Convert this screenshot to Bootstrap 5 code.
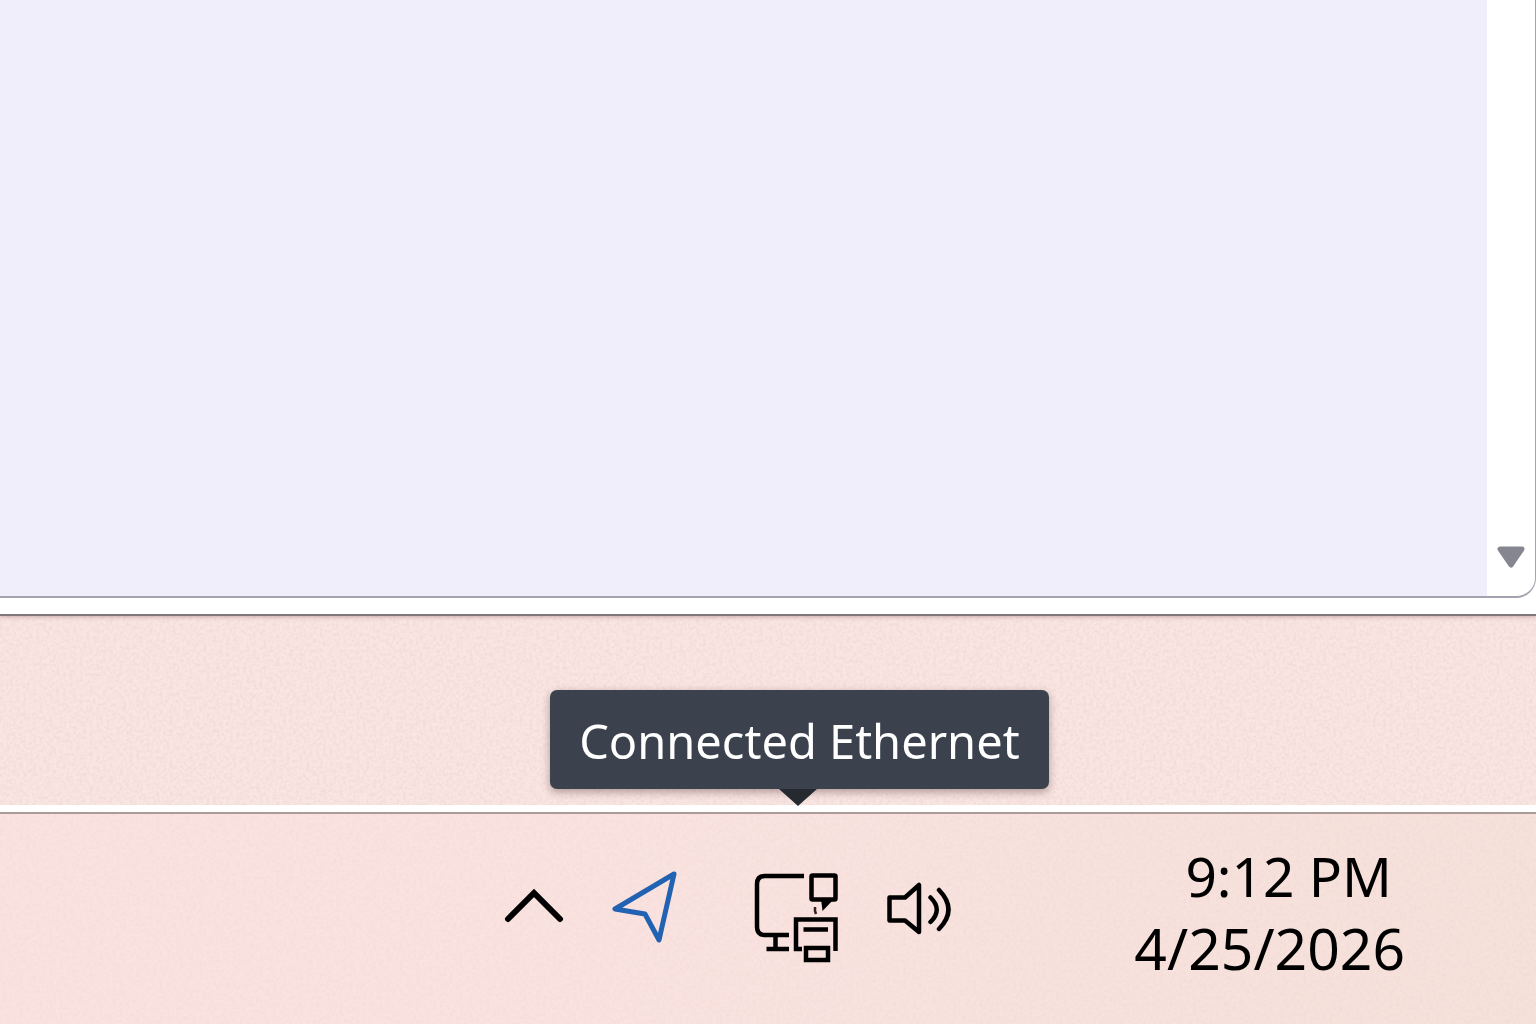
<!DOCTYPE html>
<html lang="en">
<head>
<meta charset="utf-8">
<meta name="viewport" content="width=device-width, initial-scale=1">
<title>Taskbar</title>
<link href="https://cdn.jsdelivr.net/npm/bootstrap@5.3.0/dist/css/bootstrap.min.css" rel="stylesheet">
<style>
  body {
    font-family: "Noto Sans", "Open Sans", sans-serif;
    color: #000;
    background: #f9e5e2;
  }
  .grain { width: 100%; height: 100%; z-index: -1; opacity: .11; }
  .app-window { background: #fff; padding-bottom: 16px; border-bottom: 2px solid #80777a; box-shadow: 0 1px 4px rgba(90, 50, 50, .3); }
  .pane { border: solid #a3a2ad; border-width: 0 1px 2px 0; border-bottom-right-radius: 20px; background: #fff; overflow: hidden; }
  .pane-body { background: #f0eefb; }
  .scroll-track { width: 48px; padding-bottom: 28px; }
  .desktop { height: 189px; }
  .taskbar {
    height: 219px;
    padding: 2px 131px 20px 16px;
    border-top: 7px solid #fff;
    box-shadow: inset 0 2px 0 #aa9a98;
    background: linear-gradient(100deg, rgba(250, 223, 221, .5), rgba(249, 224, 220, .5) 50%, rgba(243, 220, 211, .5));
  }
  .tray-btn { line-height: 0; border-radius: 6px; }
  .tray-btn svg { fill: none; stroke: #000; stroke-width: 5; }
  .gap-a { margin-left: 46px; }
  .gap-b { margin-left: 72px; }
  .gap-c { margin-left: 38px; }
  .clock { margin-left: 182px; padding: 5px 0 0; font-size: 57px; line-height: 73px; text-align: right; color: #000; }
  .clock-time { padding-right: 13px; font-size: 55px; }
  .tip {
    bottom: calc(100% + 64px);
    padding: 4px 29px 0;
    font-size: 47px;
    line-height: 95px;
    color: #fff;
    background: #3b424d;
    border-radius: 7px;
    box-shadow: 0 3px 8px rgba(70, 40, 40, .4);
  }
  .tip::after {
    content: "";
    position: absolute;
    top: 100%;
    left: 50%;
    margin-left: -20px;
    border: 19px solid transparent;
    border-top: 17px solid #252a30;
    border-bottom: 0;
  }
</style>
<script src="https://cdn.jsdelivr.net/npm/bootstrap@5.3.0/dist/js/bootstrap.bundle.min.js"></script>
</head>
<body class="d-flex flex-column min-vh-100 overflow-hidden">
<svg class="grain position-fixed top-0 start-0" aria-hidden="true">
  <filter id="paper" color-interpolation-filters="sRGB">
    <feTurbulence type="fractalNoise" baseFrequency=".3" numOctaves="3" seed="4"/>
    <feColorMatrix values="0 0 0 0 .76  0 0 0 0 .64  0 0 0 0 .61  3 0 0 0 -1.2"/>
  </filter>
  <rect width="100%" height="100%" filter="url(#paper)"/>
</svg>

<main class="app-window d-flex flex-column flex-grow-1">
  <div class="pane d-flex flex-grow-1">
    <div class="pane-body flex-grow-1"></div>
    <div class="scroll-track d-flex align-items-end justify-content-center">
      <button type="button" class="btn p-0 border-0 lh-1 d-flex" aria-label="Scroll down">
        <svg width="28" height="22" viewBox="0 0 28 22"><path d="M3 3H25L14 19Z" fill="#85868f" stroke="#85868f" stroke-width="5" stroke-linejoin="round"/></svg>
      </button>
    </div>
  </div>
</main>

<div class="desktop"></div>

<footer class="taskbar d-flex align-items-center justify-content-end">
  <button type="button" class="btn tray-btn p-0 border-0" aria-label="Show hidden icons">
    <svg width="60" height="112" viewBox="0 0 60 112"><path d="M4 66 30 40 56 66" stroke-linecap="round" stroke-width="6"/></svg>
  </button>
  <button type="button" class="btn tray-btn gap-a p-0 border-0" aria-label="Location">
    <svg width="70" height="112" viewBox="0 0 70 112"><path d="M64 21 5 56 35 61 49 87Z" stroke="#2262b2" stroke-linejoin="round"/></svg>
  </button>
  <div class="gap-b position-relative d-flex justify-content-center">
    <button type="button" class="btn tray-btn p-0 border-0" aria-label="Network" aria-describedby="net-tip">
      <svg width="94" height="112" viewBox="0 0 94 112">
        <g stroke-width="4.500">
          <path d="M52 23H13Q5 23 5 31V74Q5 82 13 82H37M23.500 82V96M14.500 96H37"/>
          <rect x="59.500" y="22.500" width="24" height="24" rx="1"/>
          <path d="M50 96H44V66.500H83.500V98M51.500 76.500H76"/>
          <rect x="54" y="95" width="22" height="12"/>
        </g>
        <path d="M69 46H82L70.500 58Z" fill="#000" stroke="none"/>
        <path d="M63 54V58L64 61" stroke-width="2.500" stroke="#3a2022"/>
      </svg>
    </button>
    <div id="net-tip" role="tooltip" class="tip position-absolute text-nowrap">Connected Ethernet</div>
  </div>
  <button type="button" class="btn tray-btn gap-c p-0 border-0" aria-label="Volume">
    <svg width="68" height="112" viewBox="0 0 68 112" stroke-linejoin="round" stroke-linecap="round">
      <g stroke-width="4.500">
        <path d="M5.500 44.500H21L35 32V79L21 67.500H5.500Z"/>
        <path d="M46.500 44.500Q59 56.500 46.500 69M55 37Q74 56.500 55 76"/>
      </g>
    </svg>
  </button>
  <button type="button" class="btn clock border-0 fw-normal text-nowrap" aria-label="Clock and calendar">
    <span class="clock-time d-block">9:12 PM</span>
    <span class="d-block">4/25/2026</span>
  </button>
</footer>
</body>
</html>
